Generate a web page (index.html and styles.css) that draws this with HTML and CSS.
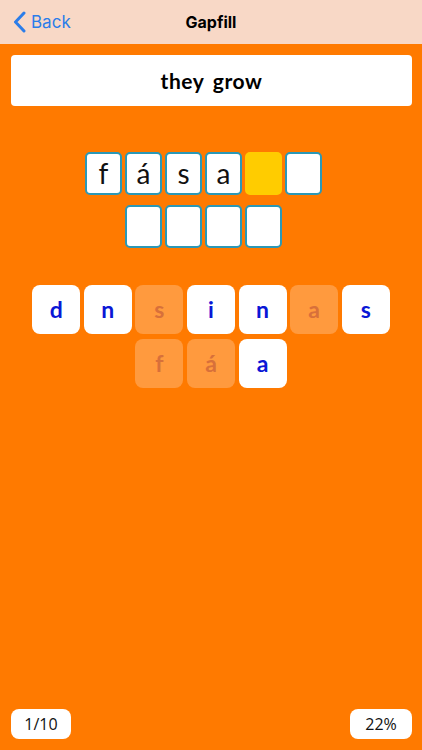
FILE: index.html
```html
<!DOCTYPE html>
<html lang="en">
<head>
<meta charset="utf-8">
<title>Gapfill</title>
<link rel="stylesheet" href="styles.css">
</head>
<body>
<div class="app">
  <header class="navbar">
    <div class="back">
      <svg class="chev" width="13" height="22" viewBox="0 0 13 22"><path d="M11 2 L2.5 11 L11 20" fill="none" stroke="#2b7de9" stroke-width="3" stroke-linecap="round" stroke-linejoin="round"/></svg>
      <span>Back</span>
    </div>
    <div class="title">Gapfill</div>
  </header>
  <main class="main">
    <div class="prompt">they grow</div>
    <div class="slots">
      <div class="slot-row">
        <div class="slot">f</div>
        <div class="slot">á</div>
        <div class="slot">s</div>
        <div class="slot">a</div>
        <div class="slot current"></div>
        <div class="slot"></div>
      </div>
      <div class="slot-row">
        <div class="slot"></div>
        <div class="slot"></div>
        <div class="slot"></div>
        <div class="slot"></div>
      </div>
    </div>
    <div class="tiles">
      <div class="tile-row">
        <div class="tile">d</div>
        <div class="tile">n</div>
        <div class="tile used">s</div>
        <div class="tile">i</div>
        <div class="tile">n</div>
        <div class="tile used">a</div>
        <div class="tile">s</div>
      </div>
      <div class="tile-row">
        <div class="tile used">f</div>
        <div class="tile used">á</div>
        <div class="tile">a</div>
      </div>
    </div>
    <div class="spacer"></div>
    <footer class="footer">
      <div class="badge">1/10</div>
      <div class="badge">22%</div>
    </footer>
  </main>
</div>
</body>
</html>
```

FILE: styles.css
```css
html, body {
  margin: 0;
  padding: 0;
}
body {
  font-family: "Open Sans", "Liberation Sans", sans-serif;
  background: #ff7a00;
}
.app {
  width: 422px;
  height: 750px;
  display: flex;
  flex-direction: column;
  overflow: hidden;
}
.navbar {
  height: 44px;
  background: #f8d8c6;
  display: flex;
  align-items: center;
  justify-content: center;
  position: relative;
  flex: none;
}
.back {
  position: absolute;
  left: 13px;
  top: 11px;
  display: flex;
  align-items: center;
  gap: 5px;
  color: #2b7de9;
  font-family: "Inter", "Liberation Sans", sans-serif;
  font-size: 17px;
}
.chev {
  display: block;
}
.title {
  font-family: "Inter", "Liberation Sans", sans-serif;
  font-weight: 700;
  font-size: 16px;
  color: #000;
}
.main {
  flex: 1;
  display: flex;
  flex-direction: column;
  padding: 11px 10px 11px 10px;
}
.prompt {
  height: 51px;
  background: #fff;
  border-radius: 4px;
  display: flex;
  align-items: center;
  justify-content: center;
  font-family: "Lato", "Liberation Sans", sans-serif;
  font-weight: 700;
  font-size: 21px;
  word-spacing: 3px;
  letter-spacing: 0.6px;
  color: #000;
  margin-left: 1px;
}
.slots {
  margin-top: 46px;
  display: flex;
  flex-direction: column;
  gap: 10px;
  padding-right: 15px;
}
.slot-row {
  display: flex;
  justify-content: center;
  gap: 3px;
}
.slot {
  width: 37px;
  height: 43px;
  box-sizing: border-box;
  background: #fff;
  border: 2px solid #2b98b6;
  border-radius: 5px;
  display: flex;
  align-items: center;
  justify-content: center;
  font-family: "Lato", "Liberation Sans", sans-serif;
  font-size: 28px;
  color: #111;
  padding-bottom: 2px;
}
.slot.current {
  background: #ffcc00;
  border-color: #ffcc00;
}
.tiles {
  margin-top: 37px;
  display: flex;
  flex-direction: column;
  gap: 5px;
}
.tile-row {
  display: flex;
  justify-content: center;
  gap: 3.6px;
}
.tile {
  width: 48px;
  height: 49px;
  background: #fff;
  border-radius: 8px;
  display: flex;
  align-items: center;
  justify-content: center;
  font-family: "Lato", "Liberation Sans", sans-serif;
  font-weight: 700;
  font-size: 23px;
  color: #0a17d6;
  padding-bottom: 2px;
  box-sizing: border-box;
}
.tile.used {
  background: #ff9a3e;
  color: #d8703a;
}
.spacer {
  flex: 1;
}
.footer {
  display: flex;
  justify-content: space-between;
  padding: 0 0 0 1px;
}
.badge {
  height: 30px;
  box-sizing: border-box;
  background: #fff;
  border-radius: 8px;
  display: flex;
  align-items: center;
  justify-content: center;
  font-family: "Open Sans", "Liberation Sans", sans-serif;
  font-weight: 500;
  font-size: 16px;
  color: #111;
}
.badge:first-child {
  width: 60px;
}
.badge:last-child {
  width: 62px;
}
```
